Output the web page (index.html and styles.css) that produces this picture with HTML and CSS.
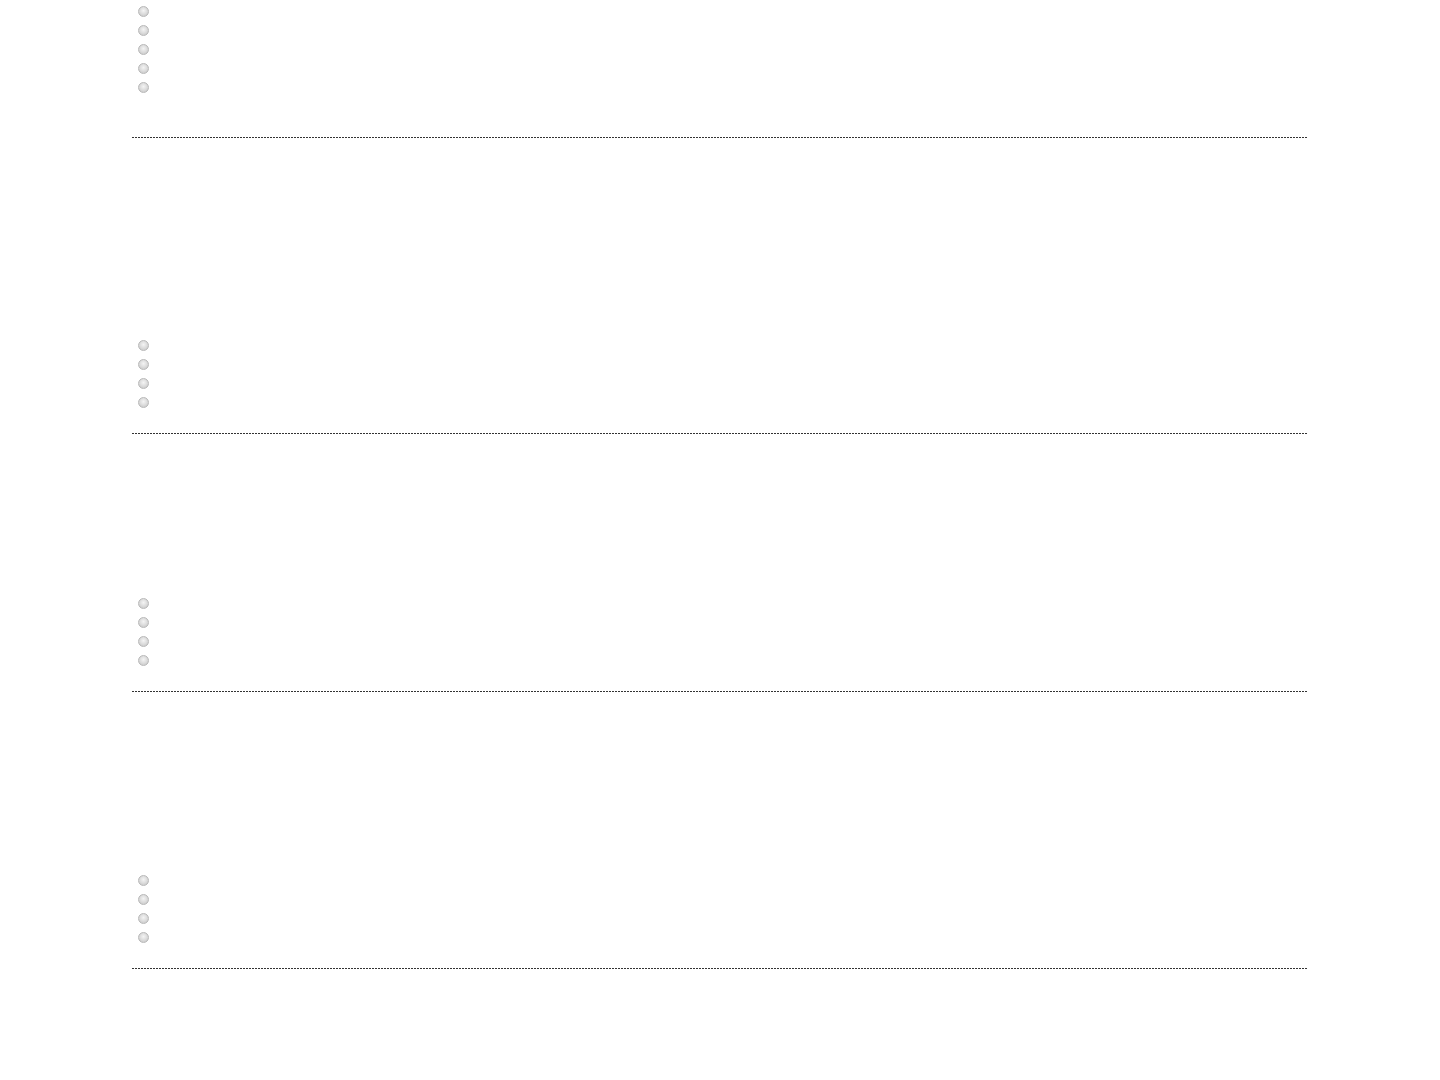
FILE: index.html
```html
<!DOCTYPE html>
<html lang="en">
<head>
<meta charset="utf-8">
<title>Options</title>
<link rel="stylesheet" href="styles.css">
</head>
<body>
<main class="page">
  <section class="group group-1">
    <ul class="options">
      <li class="option"><span class="radio"></span></li>
      <li class="option"><span class="radio"></span></li>
      <li class="option"><span class="radio"></span></li>
      <li class="option"><span class="radio"></span></li>
      <li class="option"><span class="radio"></span></li>
    </ul>
    <hr class="divider divider-1">
  </section>
  <section class="group group-2">
    <ul class="options">
      <li class="option"><span class="radio"></span></li>
      <li class="option"><span class="radio"></span></li>
      <li class="option"><span class="radio"></span></li>
      <li class="option"><span class="radio"></span></li>
    </ul>
    <hr class="divider">
  </section>
  <section class="group group-3">
    <ul class="options">
      <li class="option"><span class="radio"></span></li>
      <li class="option"><span class="radio"></span></li>
      <li class="option"><span class="radio"></span></li>
      <li class="option"><span class="radio"></span></li>
    </ul>
    <hr class="divider">
  </section>
  <section class="group group-4">
    <ul class="options">
      <li class="option"><span class="radio"></span></li>
      <li class="option"><span class="radio"></span></li>
      <li class="option"><span class="radio"></span></li>
      <li class="option"><span class="radio"></span></li>
    </ul>
    <hr class="divider divider-4">
  </section>
</main>
</body>
</html>
```
FILE: styles.css
```css
html, body {
  margin: 0;
  padding: 0;
  background: #ffffff;
  font-family: "Liberation Sans", Arial, sans-serif;
}

.page {
  width: 1176px;
  margin: 0 auto;
  padding-top: 2px;
  padding-bottom: 100px;
}

.group {
  display: flex;
  flex-direction: column;
}

.group-2 { padding-top: 198px; }
.group-3 { padding-top: 160px; }
.group-4 { padding-top: 178.5px; }

.options {
  list-style: none;
  margin: 0;
  padding: 0;
  display: flex;
  flex-direction: column;
}

.option {
  height: 19px;
  display: flex;
  align-items: center;
  padding-left: 5px;
}

.radio {
  width: 11px;
  height: 11px;
  box-sizing: border-box;
  border-radius: 50%;
  border: 1px solid #b8b8b8;
  background: radial-gradient(circle at 50% 40%, #f4f4f4 0%, #dcdcdc 50%, #c2c2c2 100%);
  margin-left: 0.5px;
}

.divider {
  border: 0;
  height: 1px;
  margin: 21px 0 0 0;
  background: repeating-linear-gradient(to right, #333333 0 2px, transparent 2px 3px);
}

.divider-1 { margin-top: 40px; }
.divider-4 { margin-top: 21.5px; }
```
